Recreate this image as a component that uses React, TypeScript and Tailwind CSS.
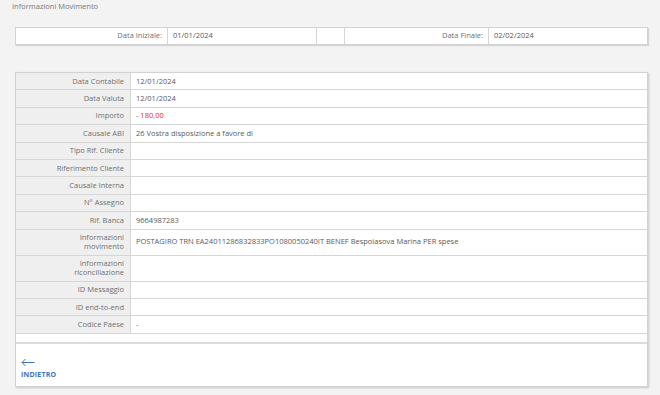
import React from 'react';

type Row = { label: React.ReactNode; value?: React.ReactNode; tall?: boolean };

const rows: Row[] = [
  { label: 'Data Contabile', value: '12/01/2024' },
  { label: 'Data Valuta', value: '12/01/2024' },
  { label: 'Importo', value: <span className="text-[#e8252b]">- 180,00</span> },
  { label: 'Causale ABI', value: '26 Vostra disposizione a favore di' },
  { label: 'Tipo Rif. Cliente' },
  { label: 'Riferimento Cliente' },
  { label: 'Causale Interna' },
  { label: 'N° Assegno' },
  { label: 'Rif. Banca', value: '9664987283' },
  {
    label: (
      <>
        Informazioni
        <br />
        movimento
      </>
    ),
    value: 'POSTAGIRO TRN EA24011286832833PO1080050240IT BENEF Bespoiasova Marina PER spese',
    tall: true,
  },
  {
    label: (
      <>
        Informazioni
        <br />
        riconciliazione
      </>
    ),
    tall: true,
  },
  { label: 'ID Messaggio' },
  { label: 'ID end-to-end' },
  { label: 'Codice Paese', value: '-' },
];

const DetailRow: React.FC<{ row: Row }> = ({ row }) => (
  <div
    className={`flex border-b border-[#d6d6d6] ${row.tall ? 'h-[26px]' : 'h-[17.4px]'}`}
  >
    <div className="w-[115px] shrink-0 bg-[#efefef] border-r border-[#d6d6d6] flex items-center justify-end pr-[6px] text-right leading-[9px] text-[#707070]">
      <span>{row.label}</span>
    </div>
    <div className="flex-1 flex items-center pl-[5px] text-[#5a5a5a]">{row.value}</div>
  </div>
);

export default function App() {
  return (
    <div
      className="w-[660px] h-[395px] bg-[#f3f3f3] text-[7.5px] overflow-hidden"
      style={{ fontFamily: '"Open Sans", "Liberation Sans", sans-serif' }}
    >
      <div className="pl-[12px] pt-[1px] h-[27px] text-[#777]">Informazioni Movimento</div>

      <div className="mx-[15px] w-[633px] h-[18px] flex bg-white border border-[#d2d2d2] shadow-[1px_1px_1px_rgba(0,0,0,0.12)] text-[#707070]">
        <div className="w-[152px] flex items-center justify-end pr-[5px] border-r border-[#d6d6d6]">Data Iniziale:</div>
        <div className="w-[149px] flex items-center pl-[5px] border-r border-[#d6d6d6] text-[#5a5a5a]">01/01/2024</div>
        <div className="w-[28px] border-r border-[#d6d6d6]" />
        <div className="w-[144px] flex items-center justify-end pr-[5px] border-r border-[#d6d6d6]">Data Finale:</div>
        <div className="flex-1 flex items-center pl-[5px] text-[#5a5a5a]">02/02/2024</div>
      </div>

      <div className="mt-[27px] mx-[15px] w-[633px] bg-white border border-[#d2d2d2] shadow-[1px_1px_2px_rgba(0,0,0,0.18)]">
        {rows.map((row, i) => (
          <DetailRow key={i} row={row} />
        ))}
        <div className="h-[10px] border-b-2 border-[#dcdcdc]" />
        <div className="h-[42px] flex flex-col justify-end pl-[5px] pb-[5px]">
          <svg width="14" height="9" viewBox="0 0 14 9" className="mb-[3px]" fill="none" stroke="#3d74ad" strokeWidth="1">
            <path d="M13.5 4.5H1M4.5 1L1 4.5L4.5 8" />
          </svg>
          <span className="font-bold text-[#3d74ad] text-[7px] tracking-[0.2px]">INDIETRO</span>
        </div>
      </div>
    </div>
  );
}
